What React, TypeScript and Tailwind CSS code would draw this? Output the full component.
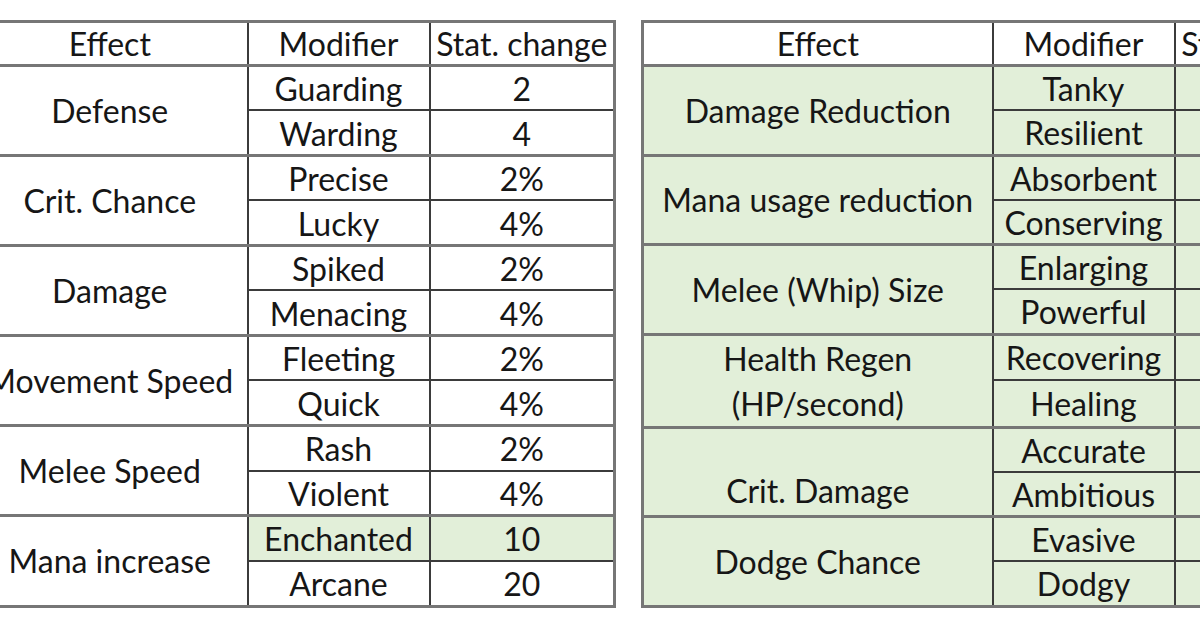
type Mod = { name: string; value: string; green?: boolean };
type Group = { effect: string[]; mods: Mod[]; align?: "middle" | "bottom" };

const leftGroups: Group[] = [
  { effect: ["Defense"], mods: [{ name: "Guarding", value: "2" }, { name: "Warding", value: "4" }] },
  { effect: ["Crit. Chance"], mods: [{ name: "Precise", value: "2%" }, { name: "Lucky", value: "4%" }] },
  { effect: ["Damage"], mods: [{ name: "Spiked", value: "2%" }, { name: "Menacing", value: "4%" }] },
  { effect: ["Movement Speed"], mods: [{ name: "Fleeting", value: "2%" }, { name: "Quick", value: "4%" }] },
  { effect: ["Melee Speed"], mods: [{ name: "Rash", value: "2%" }, { name: "Violent", value: "4%" }] },
  {
    effect: ["Mana increase"],
    mods: [{ name: "Enchanted", value: "10", green: true }, { name: "Arcane", value: "20" }],
  },
];

const rightGroups: Group[] = [
  { effect: ["Damage Reduction"], mods: [{ name: "Tanky", value: "" }, { name: "Resilient", value: "" }] },
  { effect: ["Mana usage reduction"], mods: [{ name: "Absorbent", value: "" }, { name: "Conserving", value: "" }] },
  { effect: ["Melee (Whip) Size"], mods: [{ name: "Enlarging", value: "" }, { name: "Powerful", value: "" }] },
  { effect: ["Health Regen", "(HP/second)"], mods: [{ name: "Recovering", value: "" }, { name: "Healing", value: "" }] },
  {
    effect: ["Crit. Damage"],
    align: "bottom",
    mods: [{ name: "Accurate", value: "" }, { name: "Ambitious", value: "" }],
  },
  { effect: ["Dodge Chance"], mods: [{ name: "Evasive", value: "" }, { name: "Dodgy", value: "" }] },
];

const cell = "border-2 border-[#3b3b3b] p-0 text-center leading-[38px] whitespace-nowrap";
const groupTop = "border-t-[3px] border-t-[#767676]";

function StatTable({
  groups,
  widths,
  allGreen,
  className,
}: {
  groups: Group[];
  widths: [number, number, number];
  allGreen?: boolean;
  className?: string;
}) {
  const total = widths[0] + widths[1] + widths[2];
  return (
    <table
      className={`shrink-0 table-fixed border-collapse border-[3px] border-[#767676] ${className ?? ""}`}
      style={{ width: total }}
    >
      <colgroup>
        <col style={{ width: widths[0] }} />
        <col style={{ width: widths[1] }} />
        <col style={{ width: widths[2] }} />
      </colgroup>
      <thead>
        <tr className="h-[44px]">
          <th className={`${cell} font-normal`}>Effect</th>
          <th className={`${cell} font-normal`}>Modifier</th>
          <th className={`${cell} font-normal`}>Stat. change</th>
        </tr>
      </thead>
      <tbody>
        {groups.map((g) =>
          g.mods.map((m, i) => {
            const bg = allGreen || m.green ? "bg-[#e2efd9]" : "bg-white";
            const top = i === 0 ? groupTop : "";
            return (
              <tr key={g.effect.join() + m.name} className={i === 0 ? "h-[44.5px]" : "h-[45px]"}>
                {i === 0 && (
                  <td
                    rowSpan={g.mods.length}
                    className={`${cell} ${groupTop} ${allGreen ? "bg-[#e2efd9]" : "bg-white"} ${
                      g.align === "bottom" ? "align-bottom pb-[2px]" : "align-middle"
                    } leading-[45px]`}
                  >
                    {g.effect.map((line) => (
                      <div key={line}>{line}</div>
                    ))}
                  </td>
                )}
                <td className={`${cell} ${top} ${bg} pt-[2px]`}>{m.name}</td>
                <td className={`${cell} ${top} ${bg} pt-[2px]`}>{m.value}</td>
              </tr>
            );
          })
        )}
      </tbody>
    </table>
  );
}

export default function App() {
  return (
    <div className="h-[628px] w-[1200px] overflow-hidden bg-white font-['Lato','Liberation_Sans',sans-serif] text-[32px] text-[#161616]">
      <div className="ml-[-30px] mt-[20px] flex gap-[25px]">
        <StatTable groups={leftGroups} widths={[276, 182, 185]} />
        <StatTable groups={rightGroups} widths={[350, 182, 185]} allGreen />
      </div>
    </div>
  );
}
